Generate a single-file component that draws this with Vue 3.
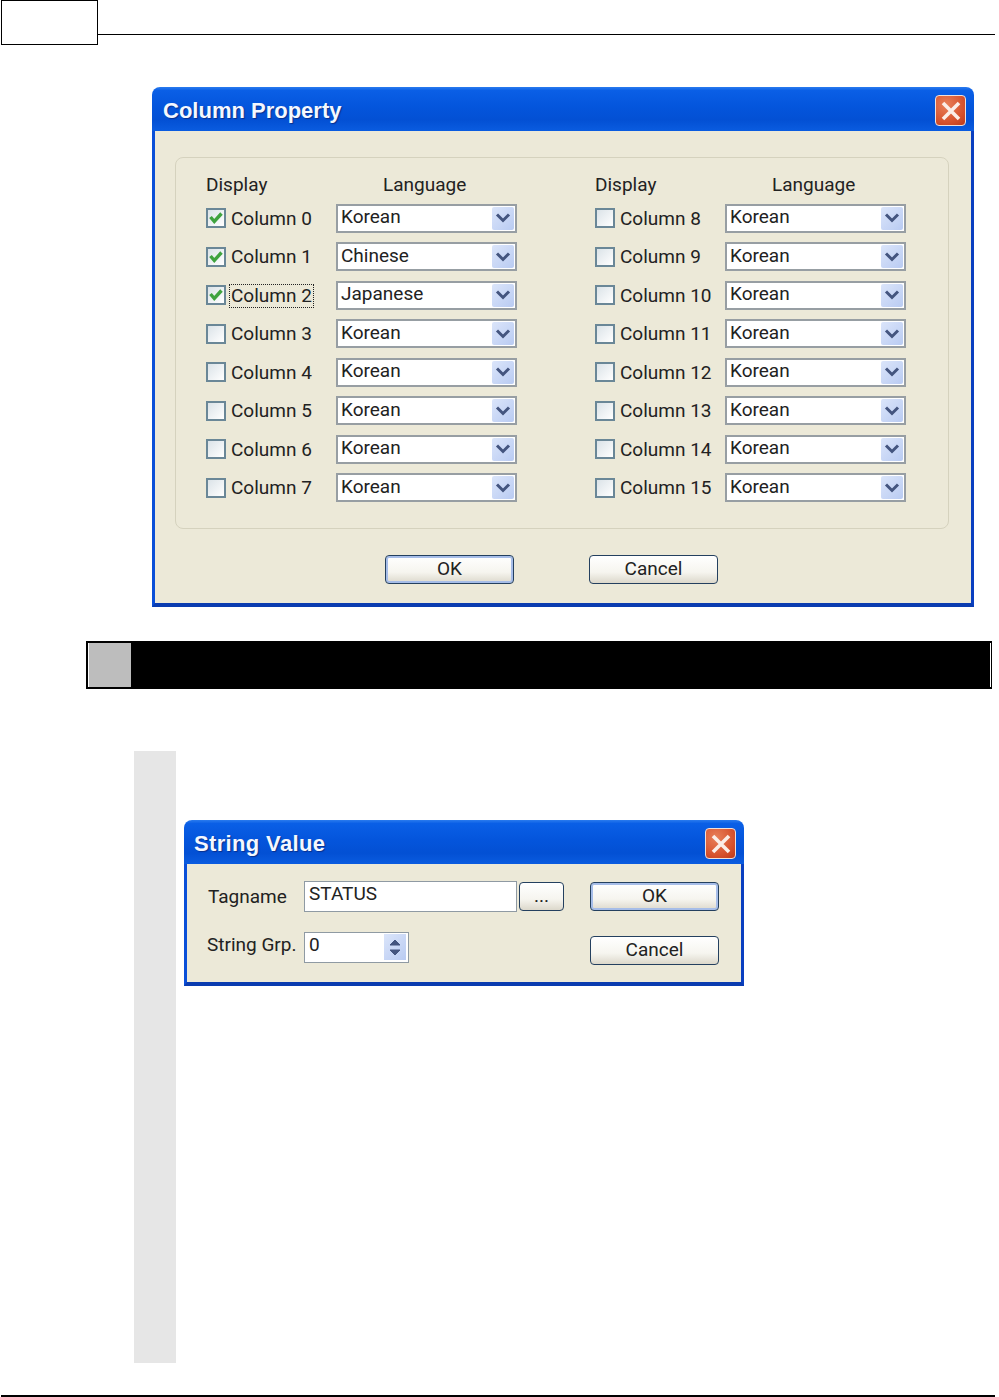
<script setup>
const left = [
  { name: 'Column 0', lang: 'Korean', checked: true },
  { name: 'Column 1', lang: 'Chinese', checked: true },
  { name: 'Column 2', lang: 'Japanese', checked: true, focus: true },
  { name: 'Column 3', lang: 'Korean' },
  { name: 'Column 4', lang: 'Korean' },
  { name: 'Column 5', lang: 'Korean' },
  { name: 'Column 6', lang: 'Korean' },
  { name: 'Column 7', lang: 'Korean' },
];
const right = [8, 9, 10, 11, 12, 13, 14, 15].map((n) => ({ name: `Column ${n}`, lang: 'Korean' }));
const columns = [left, right];
</script>

<template>
  <div class="page">
    <div class="page-head">
      <div class="page-box"></div>
      <div class="page-line"></div>
    </div>

    <div class="dialog prop-dialog">
      <div class="titlebar">
        <span class="title">Column Property</span>
        <span class="close">
          <svg width="22" height="22" viewBox="0 0 22 22"><path d="M3 3 L19 19 M19 3 L3 19" stroke="#fbeee8" stroke-width="3.6" /></svg>
        </span>
      </div>
      <div class="dialog-body prop-body">
        <div class="group">
          <div v-for="(col, i) in columns" :key="i" class="group-col">
            <div class="col-head">
              <span class="head-display">Display</span>
              <span class="head-lang">Language</span>
            </div>
            <div v-for="row in col" :key="row.name" class="row">
              <span class="check" :class="{ on: row.checked }">
                <svg v-if="row.checked" width="16" height="16" viewBox="0 0 16 16"><path d="M2.5 7 L6.3 11.5 L13.5 3.5" fill="none" stroke="#3fa33f" stroke-width="3.4" /></svg>
              </span>
              <span class="check-label"><span class="label-text" :class="{ focus: row.focus }">{{ row.name }}</span></span>
              <div class="select">
                <span class="select-text">{{ row.lang }}</span>
                <span class="arrow">
                  <svg width="16" height="12" viewBox="0 0 16 12"><path d="M2 2.5 L8 8.5 L14 2.5" fill="none" stroke="#44557f" stroke-width="3" /></svg>
                </span>
              </div>
            </div>
          </div>
        </div>
        <div class="prop-actions">
          <button class="btn default wide">OK</button>
          <button class="btn wide">Cancel</button>
        </div>
      </div>
    </div>

    <div class="section-bar">
      <div class="section-num"></div>
      <div class="section-edge"></div>
    </div>

    <div class="step">
      <div class="step-side"></div>
      <div class="step-main">
        <div class="dialog string-dialog">
          <div class="titlebar">
            <span class="title">String Value</span>
            <span class="close">
              <svg width="22" height="22" viewBox="0 0 22 22"><path d="M3 3 L19 19 M19 3 L3 19" stroke="#fbeee8" stroke-width="3.6" /></svg>
            </span>
          </div>
          <div class="dialog-body string-body">
            <div class="string-fields">
              <div class="field-row">
                <span class="field-label tag-label">Tagname</span>
                <div class="input tag-input">STATUS</div>
                <button class="btn dots">...</button>
              </div>
              <div class="field-row grp-row">
                <span class="field-label grp-label">String Grp.</span>
                <div class="input spin-input">
                  <span>0</span>
                  <span class="spin">
                    <svg width="16" height="26" viewBox="0 0 16 26">
                      <path d="M3 11 L8 6 L13 11 Z" fill="#44557f" stroke="#44557f" stroke-width="1" />
                      <path d="M3 16 L8 21 L13 16 Z" fill="#44557f" stroke="#44557f" stroke-width="1" />
                    </svg>
                  </span>
                </div>
              </div>
            </div>
            <div class="string-actions">
              <button class="btn default wide">OK</button>
              <button class="btn wide">Cancel</button>
            </div>
          </div>
        </div>
      </div>
    </div>

    <div class="page-foot"></div>
  </div>
</template>

<style>
html, body {
  margin: 0;
  background: #fff;
}
</style>

<style scoped>
.page {
  width: 999px;
  height: 1397px;
  overflow: hidden;
  display: flex;
  flex-direction: column;
  background: #fff;
  font-family: Roboto, "Liberation Sans", Arial, sans-serif;
  color: #222;
}

.page-head {
  display: flex;
  height: 45px;
  padding-left: 1px;
  padding-right: 4px;
}

.page-box {
  width: 97px;
  height: 45px;
  box-sizing: border-box;
  border: 1px solid #000;
}

.page-line {
  flex: 1;
  height: 35px;
  box-sizing: border-box;
  border-bottom: 1px solid #000;
}

.dialog {
  box-sizing: border-box;
  display: flex;
  flex-direction: column;
  border-radius: 8px 8px 0 0;
  overflow: hidden;
}

.prop-dialog {
  width: 822px;
  height: 520px;
  margin: 42px 0 0 152px;
}

.titlebar {
  height: 44px;
  flex: none;
  display: flex;
  align-items: center;
  justify-content: space-between;
  padding: 3px 8px 0 11px;
  box-sizing: border-box;
  background: linear-gradient(180deg, #2a7bee 0, #0a5fe6 8%, #0455dc 45%, #0350d4 75%, #0a5ce0 100%);
}

.title {
  color: #f4f8ff;
  font-family: "Liberation Sans", Arial, sans-serif;
  font-size: 22px;
  font-weight: 700;
  text-shadow: 1px 1px 1px #0a2f8c;
}

.close {
  width: 31px;
  height: 31px;
  box-sizing: border-box;
  display: flex;
  align-items: center;
  justify-content: center;
  border: 1px solid #f0e0da;
  border-radius: 4px;
  background: radial-gradient(circle at 35% 30%, #e8805a, #d6512c 65%, #bd3a1a);
}

.dialog-body {
  flex: 1;
  box-sizing: border-box;
  background: #ece9d8;
  border-left: 3px solid #0a4fd8;
  border-right: 3px solid #0a3fc0;
  border-bottom: 4px solid #0a3cb0;
}

.prop-body {
  padding: 26px 22px 0 20px;
}

.group {
  box-sizing: border-box;
  height: 372px;
  display: flex;
  padding: 9px 0 0 30px;
  gap: 78px;
  border: 1px solid #d5d2be;
  border-radius: 8px;
}

.group-col {
  width: 311px;
}

.col-head {
  display: flex;
  height: 32px;
  font-size: 19px;
  line-height: 36px;
}

.head-display {
  width: 177px;
}

.row {
  display: flex;
  align-items: center;
  height: 38.5px;
  font-size: 19px;
}

.check {
  flex: none;
  width: 20px;
  height: 20px;
  box-sizing: border-box;
  display: flex;
  align-items: center;
  justify-content: center;
  border: 2px solid #6a8797;
  background: linear-gradient(135deg, #dbe3e8, #fff);
}

.check-label {
  flex: none;
  width: 110px;
  box-sizing: border-box;
  padding-left: 5px;
}

.label-text {
  display: inline-block;
  line-height: 20px;
}

.label-text.focus {
  outline: 1px dotted #222;
  outline-offset: 1px;
}

.select {
  width: 181px;
  height: 29px;
  box-sizing: border-box;
  display: flex;
  align-items: center;
  justify-content: space-between;
  background: #fff;
  border: 2px solid #979ea3;
  padding: 0 1px 0 3px;
}

.select-text {
  line-height: 22px;
  margin-top: -2px;
}

.arrow {
  width: 22px;
  height: 23px;
  display: flex;
  align-items: center;
  justify-content: center;
  background: linear-gradient(135deg, #dbe5fa, #b9cbf2);
  border-radius: 2px;
}

.prop-actions {
  display: flex;
  gap: 75px;
  padding: 26px 0 0 210px;
}

.btn {
  box-sizing: border-box;
  height: 29px;
  padding: 0 0 3px;
  font-family: inherit;
  font-size: 19px;
  color: #222;
  border: 1px solid #24405f;
  border-radius: 4px;
  background: linear-gradient(180deg, #fff 0, #f6f5ef 60%, #dcd8cb 100%);
}

.btn.wide {
  width: 129px;
}

.btn.default {
  box-shadow: inset 0 0 0 2px #a6bde8;
}

.section-bar {
  width: 906px;
  height: 48px;
  box-sizing: border-box;
  margin: 34px 0 0 86px;
  background: #000;
  padding: 2px 1px 2px 2px;
  display: flex;
  justify-content: space-between;
}

.section-num {
  width: 43px;
  background: #bdbdbd;
  border-left: 1px solid #fff;
  box-sizing: border-box;
}

.section-edge {
  width: 1px;
  background: #fff;
}

.step {
  display: flex;
  margin: 62px 0 0 134px;
  height: 612px;
}

.step-side {
  width: 42px;
  background: #e6e6e6;
}

.step-main {
  padding: 69px 0 0 8px;
}

.string-dialog {
  width: 560px;
  height: 166px;
}

.string-dialog .title {
  margin-left: -1px;
  letter-spacing: 0.35px;
}

.string-body {
  display: flex;
  justify-content: space-between;
  padding: 17px 22px 0 20px;
}

.string-fields {
  font-size: 19px;
}

.field-row {
  display: flex;
  align-items: center;
}

.grp-row {
  margin-top: 20px;
}

.field-label {
  width: 97px;
}

.grp-label {
  margin-top: -6px;
}

.tag-label {
  margin-left: 1px;
  width: 96px;
}

.input {
  box-sizing: border-box;
  background: #fff;
  border: 1px solid #8f9aa3;
  height: 31px;
  padding-left: 4px;
  line-height: 23px;
}

.tag-input {
  width: 213px;
}

.dots {
  width: 45px;
  margin-left: 2px;
  height: 29px;
}

.spin-input {
  width: 105px;
  display: flex;
  justify-content: space-between;
  padding-right: 2px;
}

.spin {
  width: 22px;
  height: 26px;
  margin-top: 1px;
  display: flex;
  justify-content: center;
  background: linear-gradient(135deg, #dbe5fa, #b9cbf2);
}

.string-actions {
  display: flex;
  flex-direction: column;
  gap: 25px;
  padding-top: 1px;
}

.page-foot {
  margin: auto 4px 0 1px;
  height: 2px;
  background: #000;
}
</style>
